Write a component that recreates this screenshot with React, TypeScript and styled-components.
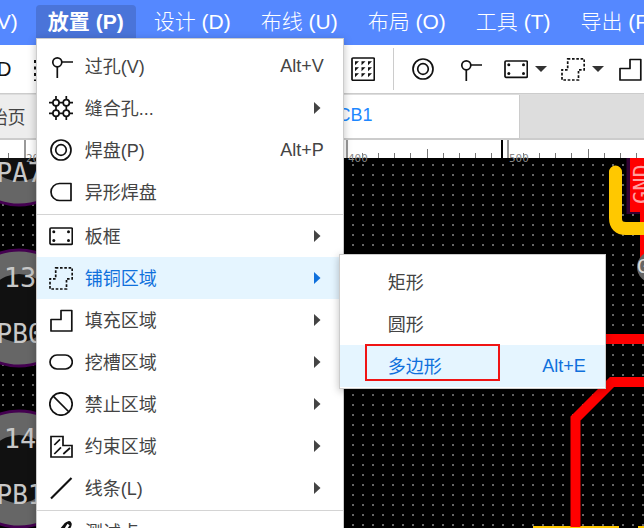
import React from "react";
import styled, { createGlobalStyle, css } from "styled-components";

const GlobalStyle = createGlobalStyle`
  * { box-sizing: border-box; }
  html, body { margin: 0; height: 100%; }
  #root { height: 100%; }
  body, button {
    font-family: "Liberation Sans", "Noto Sans CJK SC", sans-serif;
    font-size: 18px;
    font-weight: 400;
  }
  button { border: 0; padding: 0; background: none; color: inherit; cursor: pointer; }
  ul { list-style: none; margin: 0; padding: 0; }
`;

const Page = styled.div`
  display: flex;
  flex-direction: column;
  height: 100vh;
  overflow: hidden;
  background: #000;
`;

const MenuBar = styled.nav`
  flex: none;
  display: flex;
  align-items: center;
  gap: 6px;
  height: 45px;
  padding-bottom: 2px;
  margin-left: -70px;
  background: #5588ff;
  color: #fff;
`;

const MenuSlot = styled.div`
  flex: none;
  position: relative;
`;

const MenuTitle = styled.button<{ $open?: boolean }>`
  display: block;
  height: 33px;
  padding: 0 12px;
  border-radius: 4px 4px 0 0;
  font-size: 21px;
  font-weight: 300;
  line-height: 33px;
  white-space: nowrap;
  ${(p) => p.$open && css`background: #4a74d9; font-weight: 700;`}
`;

const panel = css`
  position: absolute;
  border: 1px solid #ccc;
  background: #fff;
  color: #444;
  box-shadow: 0 2px 8px rgba(0, 0, 0, 0.25);
`;

const Menu = styled.ul`
  ${panel}
  z-index: 10;
  top: 100%;
  left: 0;
  width: 308px;
  padding: 6px 0;
`;

const SubMenu = styled.ul`
  ${panel}
  z-index: 11;
  top: -3px;
  left: calc(100% - 4px);
  width: 267px;
  padding: 6px 0 1px;
`;

const MenuItem = styled.li`
  position: relative;
`;

const Divider = styled.li`
  height: 2px;
  border-bottom: 1px solid #d4d4d4;
`;

const Row = styled.button<{ $active?: boolean }>`
  display: flex;
  align-items: center;
  gap: 12px;
  width: 100%;
  height: 42px;
  padding: 0 19px 0 12px;
  color: ${(p) => (p.$active ? "#0f70dc" : "inherit")};
  background: ${(p) => (p.$active ? "#e5f5ff" : "transparent")};
  text-align: left;
  white-space: nowrap;
`;

const RowLabel = styled.span`
  flex: 1;
  padding-bottom: 3px;
`;

const IconSlot = styled.span`
  flex: none;
  width: 24px;
  height: 24px;
`;

const Highlight = styled.span`
  position: absolute;
  top: -1px;
  left: 25px;
  width: 135px;
  height: 37px;
  border: 2px solid #f01414;
  pointer-events: none;
`;

const IconSvg = styled.svg`
  flex: none;
  display: block;
  width: 24px;
  height: 24px;
  fill: none;
  stroke: #111;
  stroke-width: 1.7;
`;

const ArrowSvg = styled.svg`
  flex: none;
  margin-right: 3px;
  fill: currentColor;
`;

const Toolbar = styled.div`
  flex: none;
  display: flex;
  align-items: center;
  height: 49px;
  border-bottom: 1px solid #ccc;
  background: #fff;
  overflow: hidden;
`;

const ToolGroup = styled.div`
  flex: none;
  display: flex;
  align-items: center;
  gap: 21px;
  width: 351px;
  margin-left: -14px;
  color: #111;
`;

const ToolButton = styled.button<{ $gap?: number }>`
  flex: none;
  display: flex;
  align-items: center;
  gap: 7px;
  margin-right: ${(p) => p.$gap ?? 0}px;
  font-size: 20px;
`;

const GridSpot = styled.div`
  flex: none;
  display: flex;
  margin-left: 14px;
`;

const Separator = styled.span`
  flex: none;
  width: 1px;
  height: 42px;
  margin: 0 17px 0 18px;
  background: #ccc;
`;

const TabBar = styled.div`
  flex: none;
  display: flex;
  height: 46px;
  padding-top: 1px;
  border-bottom: 2px solid #ccc;
  background: #ddd;
  overflow: hidden;
`;

const Tab = styled.button<{ $active?: boolean; $width: number }>`
  flex: none;
  width: ${(p) => p.$width}px;
  padding-bottom: 2px;
  border-right: 1px solid #ccc;
  background: ${(p) => (p.$active ? "#fff" : "#ededed")};
  color: ${(p) => (p.$active ? "#1e88ff" : "#444")};
  text-align: center;
  white-space: nowrap;
  &:first-child { margin-left: -181px; }
`;

const RulerStrip = styled.div`
  flex: none;
  position: relative;
  z-index: 1;
  height: 18px;
  background: #fff;
`;

const RulerSvg = styled.svg`
  display: block;
  width: 100%;
  height: 18px;
  overflow: visible;
  font-family: "DejaVu Sans Mono", monospace;
  font-size: 11px;
  fill: #888;
`;

const Board = styled.main`
  flex: 1;
  min-height: 0;
  overflow: hidden;
`;

const BoardSvg = styled.svg`
  display: block;
  width: 100%;
  height: 100%;
  background: #000;
  font-family: "DejaVu Sans Mono", monospace;
`;

const shapes: Record<string, React.ReactNode> = {
  via: <><circle cx="8.3" cy="8.3" r="4.5" /><path d="M13 8H24M8.3 13V24" /></>,
  stitch: <><path d="M7 0V4M7 10V14M7 20V24M17.3 0V4M17.3 10V14M17.3 20V24M0 6.7H4M10 6.7H14M20 6.7H24M0 17.3H4M10 17.3H14M20 17.3H24" /><circle cx="7" cy="6.7" r="3.1" /><circle cx="17.3" cy="6.7" r="3.1" /><circle cx="7" cy="17.3" r="3.1" /><circle cx="17.3" cy="17.3" r="3.1" /></>,
  pad: <><circle cx="12" cy="12" r="10" /><circle cx="12" cy="12" r="5.3" /></>,
  shapedPad: <path d="M22 3.5V20.5H10.5A8.5 8.5 0 0 1 10.5 3.5Z" strokeLinejoin="round" />,
  outline: <><rect x="1" y="4" width="22.3" height="16.3" rx="1" /><g fill="#111" stroke="none"><circle cx="4.8" cy="7.8" r="1.5" /><circle cx="19.5" cy="7.8" r="1.5" /><circle cx="4.8" cy="16.5" r="1.5" /><circle cx="19.5" cy="16.5" r="1.5" /></g></>,
  copper: <path d="M6.7 1.8H23.2V12.8H17.5V23H1V12.8H6.7Z" strokeDasharray="2.6 1.7" />,
  fill: <path d="M12 2.500H22.800V23H2V11.500H12Z" strokeLinejoin="round" />,
  slot: <rect x="1" y="5" width="22.3" height="14" rx="7" />,
  forbid: <><circle cx="12" cy="12" r="11.2" /><path d="M4.2 4.2L20 20" /></>,
  constraint: <path d="M2 2.500H14V11.500H23V23H2ZM5.300 11L11 5.300M5.300 20L12 13.300M14.300 20L21 14" />,
  line: <path d="M2 22.5L22.5 2" strokeWidth="2.2" />,
  probe: <><path d="M2 23L9 15" strokeWidth="2" /><path d="M8 14L16 4Q20 .5 21.5 3Q23 5 19 10L12 17Z" fill="#111" /><path d="M16 10L19.5 4.5" stroke="#fff" strokeWidth="2.5" /></>,
  grid: <><rect x="1" y="1" width="22.3" height="22.3" rx="1" /><path d="M4 4.3h4l-4 4zM10.5 4.3h4l-4 4zM17 4.3h4l-4 4zM4 10.3h4l-4 4zM10.5 10.3h4l-4 4zM17 10.3h4l-4 4zM4 16.3h4l-4 4zM10.5 16.3h4l-4 4zM17 16.3h4l-4 4z" fill="#111" stroke="none" /></>,
  dots: <path d="M2.500 3V24M10 3V24M18 3V24" strokeWidth="3" strokeDasharray="3 3.5" />,
};

const Icon = ({ name }: { name: string }) => (
  <IconSvg viewBox="0 0 24 24" aria-hidden="true">{shapes[name]}</IconSvg>
);

const Arrow = () => (
  <ArrowSvg width="7" height="12" viewBox="0 0 7 12" aria-hidden="true"><path d="M0 0L6.500 6L0 12Z" /></ArrowSvg>
);

const Caret = () => (
  <svg width="12" height="6" viewBox="0 0 12 6" fill="#333" aria-hidden="true"><path d="M0 0H12L6 6Z" /></svg>
);

type Entry = { icon?: string; label: string; keys?: string; sub?: boolean };

const entries: (Entry | null)[] = [
  { icon: "via", label: "过孔(V)", keys: "Alt+V" },
  { icon: "stitch", label: "缝合孔...", sub: true },
  { icon: "pad", label: "焊盘(P)", keys: "Alt+P" },
  { icon: "shapedPad", label: "异形焊盘" },
  null,
  { icon: "outline", label: "板框", sub: true },
  { icon: "copper", label: "铺铜区域", sub: true },
  { icon: "fill", label: "填充区域", sub: true },
  { icon: "slot", label: "挖槽区域", sub: true },
  { icon: "forbid", label: "禁止区域", sub: true },
  { icon: "constraint", label: "约束区域", sub: true },
  { icon: "line", label: "线条(L)", sub: true },
  null,
  { icon: "probe", label: "测试点" },
];

const regionShapes: Entry[] = [
  { label: "矩形" },
  { label: "圆形" },
  { label: "多边形", keys: "Alt+E" },
];

const RegionMenu = () => (
  <SubMenu>
    {regionShapes.map((r) => (
      <MenuItem key={r.label}>
        <Row $active={!!r.keys}>
          <IconSlot />
          <RowLabel>{r.label}</RowLabel>
          {r.keys && <span>{r.keys}</span>}
        </Row>
        {r.keys && <Highlight />}
      </MenuItem>
    ))}
  </SubMenu>
);

const PlaceMenu = () => (
  <Menu>
    {entries.map((e, i) =>
      e ? (
        <MenuItem key={e.label}>
          <Row $active={e.icon === "copper"}>
            <Icon name={e.icon!} />
            <RowLabel>{e.label}</RowLabel>
            {e.keys && <span>{e.keys}</span>}
            {e.sub && <Arrow />}
          </Row>
          {e.icon === "copper" && <RegionMenu />}
        </MenuItem>
      ) : (
        <Divider key={i} />
      )
    )}
  </Menu>
);

const titles = ["视图 (V)", "放置 (P)", "设计 (D)", "布线 (U)", "布局 (O)", "工具 (T)", "导出 (F)"];

const ORIGIN = 25;
const STEP = 16.1;

const Ruler = () => (
  <RulerStrip>
    <RulerSvg>
      {Array.from({ length: 120 }, (_, k) => {
        const n = k - 1;
        const x = Math.round(ORIGIN + n * STEP);
        const major = n % 10 === 0;
        const h = major ? 18 : n % 5 === 0 ? 9 : 5;
        return <rect key={n} x={x - 1} y={18 - h} width={major ? 2 : 1} height={h} fill={major ? "#999" : "#777"} />;
      })}
      {[200, 300, 400, 500, 600, 700].map((v, i) => (
        <text key={v} x={ORIGIN + 1 + i * STEP * 10} y="22">{v}</text>
      ))}
      <rect x="501" width="2" height="18" fill="#000" />
    </RulerSvg>
  </RulerStrip>
);

const pads = [
  { cy: -11, number: "12", net: "PA7" },
  { cy: 150, number: "13", net: "PB0" },
  { cy: 311, number: "14", net: "PB1" },
];

const Circuit = () => (
  <Board>
    <BoardSvg>
      <defs>
        <pattern id="dots" width="10" height="10" patternUnits="userSpaceOnUse">
          <rect x="2" y="6" width="2" height="2" fill="#666" />
        </pattern>
      </defs>
      <rect width="100%" height="100%" fill="url(#dots)" />
      {pads.map((p) => (
        <g key={p.net} textAnchor="middle" fill="#c8c8c8">
          <circle cx="19" cy={p.cy} r="58" fill="#666" stroke="#440050" strokeWidth="3" />
          <circle cx="19" cy={p.cy} r="34" fill="#111" />
          <text x="20" y={p.cy - 21} fontSize="27">{p.number}</text>
          <text x="20" y={p.cy + 35} fontSize="26">{p.net}</text>
        </g>
      ))}
      <path d="M628.500 0V54H660" fill="none" stroke="#330033" strokeWidth="4" />
      <rect x="630" y="0" width="60" height="54" fill="#f00" />
      <g fill="none" stroke="#f00" strokeWidth="10">
        <path d="M645 50V110M560 181H700" />
      </g>
      <path d="M615.500 14V60Q615.500 70.500 626 70.500H700" fill="none" stroke="#ffc800" strokeWidth="13" strokeLinecap="round" />
      <text transform="translate(649 46) rotate(-90)" fontSize="22" fill="#ffa0a0">GND</text>
      <circle cx="653" cy="109" r="16" fill="#666" />
      <text x="637" y="115" fontSize="20" fill="#ddd">G</text>
      <path d="M533 368H619V400H533ZM638 368H700V400H638Z" fill="#ffc800" />
      <path d="M700 224H612L575.500 260.500V369" fill="none" stroke="#f00" strokeWidth="10" />
    </BoardSvg>
  </Board>
);

export default function App() {
  return (
    <Page>
      <GlobalStyle />
      <MenuBar>
        {titles.map((t, i) => (
          <MenuSlot key={t}>
            <MenuTitle $open={i === 1}>{t}</MenuTitle>
            {i === 1 && <PlaceMenu />}
          </MenuSlot>
        ))}
      </MenuBar>
      <Toolbar>
        <ToolGroup>
          <ToolButton>3D</ToolButton>
          <ToolButton aria-label="栅格"><Icon name="dots" /></ToolButton>
        </ToolGroup>
        <GridSpot><ToolButton aria-label="网格"><Icon name="grid" /></ToolButton></GridSpot>
        <Separator />
        <ToolButton $gap={23} aria-label="焊盘"><Icon name="pad" /></ToolButton>
        <ToolButton $gap={22} aria-label="过孔"><Icon name="via" /></ToolButton>
        <ToolButton $gap={14} aria-label="板框"><Icon name="outline" /><Caret /></ToolButton>
        <ToolButton $gap={14} aria-label="铺铜"><Icon name="copper" /><Caret /></ToolButton>
        <ToolButton aria-label="填充"><Icon name="fill" /></ToolButton>
      </Toolbar>
      <TabBar>
        <Tab $width={360}>开始页</Tab>
        <Tab $active $width={341}>PCB1</Tab>
      </TabBar>
      <Ruler />
      <Circuit />
    </Page>
  );
}
